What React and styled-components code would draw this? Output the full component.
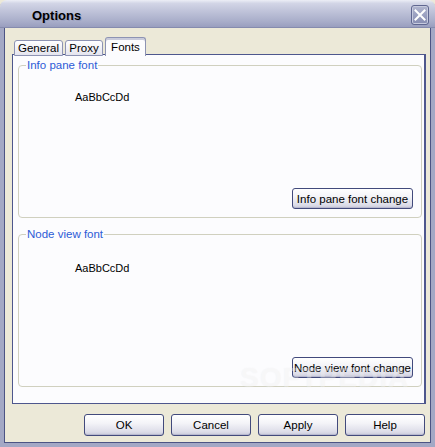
import React from 'react';
import styled, { createGlobalStyle } from 'styled-components';

const Global = createGlobalStyle`
  html, body { margin: 0; padding: 0; background: #ece9d8; }
  body { font-family: Tahoma, "Liberation Sans", Arial, sans-serif; font-size: 11px; }
`;

const Window = styled.div`
  width: 435px;
  height: 447px;
  display: flex;
  flex-direction: column;
  box-sizing: border-box;
  background: #ece9d8;
  position: relative;
  overflow: hidden;
`;

const TitleBar = styled.div`
  height: 28px;
  flex: none;
  display: flex;
  align-items: center;
  padding: 0 6px 0 32px;
  border-radius: 7px 7px 0 0;
  background: linear-gradient(#eceef6 0%, #d2d5e6 12%, #bcc0d7 45%, #a9aeca 75%, #979cbd 100%);
  box-shadow: inset 0 -1px 0 #858bae;
`;

const Title = styled.div`
  flex: 1;
  font-family: "Liberation Sans", Arial, sans-serif;
  font-weight: bold;
  font-size: 13px;
  color: #000;
  text-shadow: 1px 1px 0 #9a9fbe;
  margin-top: 2px;
`;

const CloseBox = styled.div`
  width: 18px;
  height: 20px;
  box-sizing: border-box;
  border: 1px solid #5f6690;
  border-radius: 3px;
  background: linear-gradient(#b0b5cf, #878db2);
  box-shadow: inset 0 0 0 1px #c6cade;
  display: flex;
  align-items: center;
  justify-content: center;
  margin-top: 2px;
`;

const Frame = styled.div`
  flex: 1;
  display: flex;
  flex-direction: column;
  border: 4px solid #a3a8c5;
  border-top: none;
  box-shadow: inset 1px 0 0 #4c5484, inset -1px 0 0 #4c5484, inset 0 -1px 0 #4c5484;
  padding: 9px 5px 6px 8px;
`;

const TabRow = styled.div`
  display: flex;
  align-items: flex-end;
  height: 19px;
  padding-left: 2px;
  margin-bottom: -2px;
  position: relative;
  z-index: 1;
`;

const Tab = styled.div`
  box-sizing: border-box;
  width: ${p => p.w}px;
  height: ${p => (p.active ? '19px' : '16px')};
  margin-right: ${p => (p.active ? '0' : '2px')};
  padding-top: ${p => (p.active ? '3px' : '1px')};
  text-align: center;
  border: 1px solid #8d93b3;
  border-bottom: ${p => (p.active ? 'none' : '1px solid #8d93b3')};
  border-radius: 3px 3px 0 0;
  background: ${p => (p.active ? '#fcfcfe' : 'linear-gradient(#ffffff, #e4e4ee)')};
  box-shadow: ${p => (p.active ? 'inset 0 2px 0 #c9cbdb' : 'none')};
  color: #000;
  font-size: 11.5px;
  line-height: 13px;
`;

const Panel = styled.div`
  height: 350px;
  box-sizing: border-box;
  border: 1px solid #4e578d;
  border-width: 1px 2px 1px 1px;
  background: #fcfcfe;
  display: flex;
  flex-direction: column;
  gap: 10px;
  padding: 4px 2px 16px 5px;
`;

const Group = styled.fieldset`
  flex: 1;
  margin: 0;
  padding: 0 8px 8px 56px;
  border: 1px solid #d0d0bf;
  border-radius: 4px;
  display: flex;
  flex-direction: column;
  min-width: 0;
`;

const Legend = styled.legend`
  margin-left: -49px;
  padding: 0 1px;
  color: #2c5bd6;
  font-size: 11.5px;
  line-height: 13px;
`;

const Sample = styled.div`
  margin-top: ${p => p.top}px;
  color: #000;
  font-size: 11px;
  line-height: 13px;
  flex: 1;
`;

const Button = styled.button`
  box-sizing: border-box;
  height: ${p => p.h || 21}px;
  width: ${p => (p.w ? p.w + 'px' : 'auto')};
  padding: 0;
  white-space: nowrap;
  font-family: Tahoma, "Liberation Sans", Arial, sans-serif;
  font-size: 11.5px;
  color: #000;
  border: 1px solid #424a7c;
  border-radius: 3px;
  background: linear-gradient(#ffffff 0%, #f4f4f8 40%, #dcdce8 85%, #c8c9da 100%);
  box-shadow: inset 0 -1px 0 #b8b9cf;
`;

const GroupAction = styled(Button)`
  align-self: flex-end;
  width: 121px;
`;

const ButtonRow = styled.div`
  display: flex;
  justify-content: flex-end;
  gap: 7px;
  margin-top: 10px;
  padding-right: 1px;
`;

const Watermark = styled.div`
  position: absolute;
  left: 240px;
  top: 362px;
  font-family: "Liberation Sans", Arial, sans-serif;
  font-weight: bold;
  font-size: 28px;
  letter-spacing: 1px;
  color: rgba(255, 255, 255, 0.5);
  text-shadow: 0 0 1px rgba(160, 160, 160, 0.2);
  pointer-events: none;
  opacity: 0.6;
`;

export default function App() {
  return (
    <Window>
      <Global />
      <TitleBar>
        <Title>Options</Title>
        <CloseBox>
          <svg width="12" height="12" viewBox="0 0 12 12">
            <path d="M1.5 1.5 L10.5 10.5 M10.5 1.5 L1.5 10.5" stroke="#fff" strokeWidth="2" strokeLinecap="square" />
          </svg>
        </CloseBox>
      </TitleBar>
      <Frame>
        <TabRow>
          <Tab w={49}>General</Tab>
          <Tab w={38}>Proxy</Tab>
          <Tab w={41} active>Fonts</Tab>
        </TabRow>
        <Panel>
          <Group>
            <Legend>Info pane font</Legend>
            <Sample top={19}>AaBbCcDd</Sample>
            <GroupAction>Info pane font change</GroupAction>
          </Group>
          <Group>
            <Legend>Node view font</Legend>
            <Sample top={21}>AaBbCcDd</Sample>
            <GroupAction>Node view font change</GroupAction>
          </Group>
        </Panel>
        <ButtonRow>
          <Button w={80} h={22}>OK</Button>
          <Button w={80} h={22}>Cancel</Button>
          <Button w={80} h={22}>Apply</Button>
          <Button w={80} h={22}>Help</Button>
        </ButtonRow>
      </Frame>
      <Watermark>SOFTPEDIA</Watermark>
    </Window>
  );
}
